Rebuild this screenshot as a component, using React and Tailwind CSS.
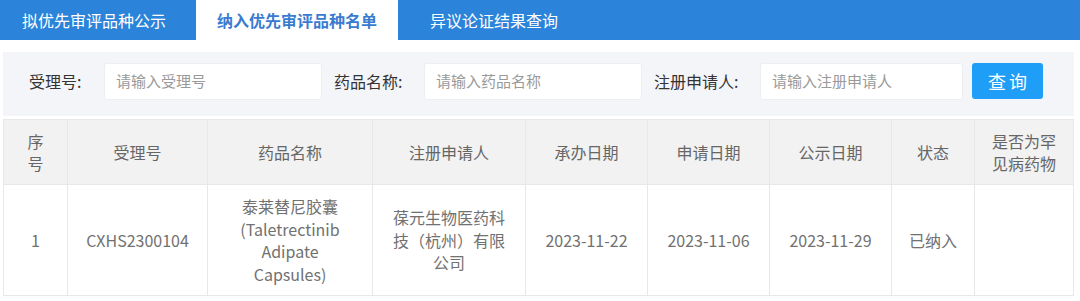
import React from "react";

const cols = [64, 140, 165, 153, 122, 122, 122, 83, 99];

function Field({ label, width, placeholder, labelClass }) {
  return (
    <>
      <span className={`text-[16px] text-[#333] whitespace-nowrap ${labelClass}`}>{label}</span>
      <div
        className="h-[37px] bg-white border border-[#eceef2] rounded-[3px] flex items-center pl-[11px] text-[15px] text-[#9a9a9a]"
        style={{ width }}
      >
        {placeholder}
      </div>
    </>
  );
}

export default function App() {
  return (
    <div className="w-[1080px] h-[301px] bg-white font-['Microsoft_YaHei','Noto_Sans_CJK_SC',sans-serif] overflow-hidden">
      {/* tabs */}
      <div className="flex h-10 bg-[#2b84d9] text-[16px]">
        <div className="w-[196px] flex items-center pl-[22px] text-white">拟优先审评品种公示</div>
        <div className="w-[202px] flex items-center justify-center bg-white font-bold text-[#3a7bd0]">纳入优先审评品种名单</div>
        <div className="flex items-center pl-[32px] text-white">异议论证结果查询</div>
      </div>

      {/* filter panel */}
      <div className="mt-3 ml-[3px] w-[1071px] h-16 bg-[#f3f5f8] flex items-start pt-[10px] pl-[26px]">
        <div className="flex items-center h-[38px]">
          <Field label="受理号:" width={218} placeholder="请输入受理号" labelClass="w-[75px]" />
          <span className="w-[12px]" />
          <Field label="药品名称:" width={218} placeholder="请输入药品名称" labelClass="w-[90px]" />
          <span className="w-[12px]" />
          <Field label="注册申请人:" width={203} placeholder="请输入注册申请人" labelClass="w-[106px]" />
          <button className="ml-[9px] w-[71px] h-9 bg-[#1f9ef8] rounded-[3px] text-white text-[18px] tracking-[3px] pl-[3px]">
            查询
          </button>
        </div>
      </div>

      {/* table */}
      <table className="mt-[3px] ml-[3px] w-[1070px] table-fixed border-collapse text-[16px] text-[#717171] leading-[22.5px] text-center">
        <colgroup>
          {cols.map((w, i) => (
            <col key={i} style={{ width: w }} />
          ))}
        </colgroup>
        <thead>
          <tr className="h-[65px] bg-[#f2f2f2]">
            {["序号", "受理号", "药品名称", "注册申请人", "承办日期", "申请日期", "公示日期", "状态", "是否为罕见病药物"].map((h, i) => (
              <th key={i} className="border border-[#e8e8e8] font-normal text-[#666] px-[14px] align-middle">
                {i === 0 ? (
                  <>序<br />号</>
                ) : i === 8 ? (
                  <>是否为罕<br />见病药物</>
                ) : (
                  h
                )}
              </th>
            ))}
          </tr>
        </thead>
        <tbody>
          <tr className="h-[111px]">
            <td className="border border-[#e8e8e8]">1</td>
            <td className="border border-[#e8e8e8]">CXHS2300104</td>
            <td className="border border-[#e8e8e8] px-[8px]">
              泰莱替尼胶囊<br />(Taletrectinib<br />Adipate<br />Capsules)
            </td>
            <td className="border border-[#e8e8e8] px-[20px]">
              葆元生物医药科<br />技（杭州）有限<br />公司
            </td>
            <td className="border border-[#e8e8e8]">2023-11-22</td>
            <td className="border border-[#e8e8e8]">2023-11-06</td>
            <td className="border border-[#e8e8e8]">2023-11-29</td>
            <td className="border border-[#e8e8e8]">已纳入</td>
            <td className="border border-[#e8e8e8]"></td>
          </tr>
        </tbody>
      </table>
    </div>
  );
}
